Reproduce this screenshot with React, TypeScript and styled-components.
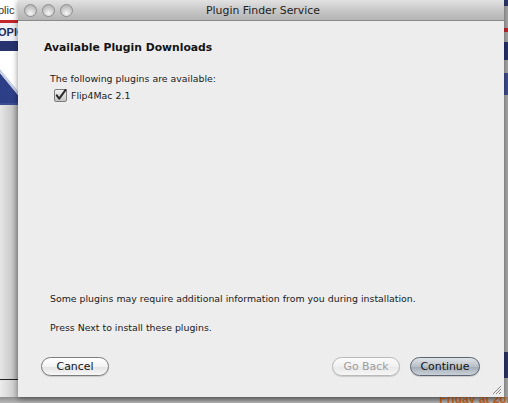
import React from 'react';
import styled, { createGlobalStyle } from 'styled-components';

const GlobalStyle = createGlobalStyle`
  html, body {
    margin: 0;
    padding: 0;
    width: 508px;
    height: 403px;
    overflow: hidden;
    background: #9c9c9c;
  }
`;

const Screen = styled.div`
  position: relative;
  width: 508px;
  height: 403px;
  overflow: hidden;
  font-family: "DejaVu Sans", "Liberation Sans", sans-serif;
  background: #b0b0b0;
`;

// the web page behind the dialog: only thin slivers of it show
const PageEdge = styled.div<{ $side: 'left' | 'right' }>`
  position: absolute;
  top: 0;
  ${(p) => (p.$side === 'left' ? 'left: 0; width: 18px;' : 'right: 0; width: 4px;')}
  height: 397px;
  display: flex;
  flex-direction: column;
  overflow: hidden;
`;

const Band = styled.div<{ $h?: number; $bg: string }>`
  position: relative;
  flex: ${(p) => (p.$h ? `0 0 ${p.$h}px` : '1')};
  background: ${(p) => p.$bg};
  overflow: hidden;
  display: flex;
  align-items: center;
`;

const PageText = styled.span<{ $color: string; $bold?: boolean }>`
  white-space: nowrap;
  color: ${(p) => p.$color};
  font-family: "Liberation Sans", Arial, sans-serif;
  font-size: 11px;
  font-weight: ${(p) => (p.$bold ? 700 : 400)};
  margin-left: -2px;
`;

const PageFooter = styled.div`
  position: absolute;
  left: 0;
  bottom: 0;
  width: 508px;
  height: 6px;
  display: flex;
  justify-content: flex-end;
  overflow: hidden;
  background: linear-gradient(#8e8e8e, #b8b8b8);
`;

const FooterText = styled.span`
  color: #c8631e;
  font-family: "Liberation Sans", Arial, sans-serif;
  font-weight: 700;
  font-size: 12px;
  line-height: 12px;
  margin-top: -4px;
  margin-right: -6px;
  white-space: nowrap;
`;

const Window = styled.div`
  position: absolute;
  left: 18px;
  top: 0;
  width: 486px;
  height: 397px;
  display: flex;
  flex-direction: column;
  background: #ededed;
  box-shadow: 0 2px 6px rgba(0, 0, 0, 0.45);
`;

const TitleBar = styled.div`
  position: relative;
  height: 20px;
  flex: none;
  display: flex;
  align-items: center;
  justify-content: center;
  background: linear-gradient(#e2e2e2, #c4c4c4 60%, #b4b4b4);
  border-bottom: 1px solid #8a8a8a;
`;

const Lights = styled.div`
  position: absolute;
  left: 6px;
  top: 4px;
  display: flex;
  gap: 5px;
`;

const Light = styled.div`
  width: 13px;
  height: 13px;
  border-radius: 50%;
  border: 1px solid #8e8e8e;
  box-sizing: border-box;
  background: radial-gradient(circle at 50% 75%, #f6f6f6 0%, #d0d0d0 45%, #a8a8a8 100%);
`;

const Title = styled.div`
  font-size: 10.9px;
  color: #1e1e1e;
  padding-left: 4px;
`;

const Body = styled.div`
  flex: 1;
  display: flex;
  flex-direction: column;
  padding: 20px 24px 21px 26px;
`;

const Heading = styled.div`
  font-size: 10.8px;
  font-weight: 700;
  color: #141414;
  line-height: 13px;
`;

const Text = styled.div<{ $top: number }>`
  font-size: 9.4px;
  color: #1a1a1a;
  line-height: 12px;
  margin-top: ${(p) => p.$top}px;
  padding-left: 6px;
`;

const PluginRow = styled.label`
  display: flex;
  align-items: center;
  gap: 4px;
  margin-top: 4px;
  padding-left: 10px;
  font-size: 9.4px;
  color: #1a1a1a;
  line-height: 13px;
`;

const Spacer = styled.div`
  flex: 1;
`;

const Buttons = styled.div`
  display: flex;
  align-items: center;
  margin-top: 23px;
  gap: 10px;
`;

const Button = styled.button<{ $default?: boolean }>`
  height: 19px;
  width: ${(p) => (p.$default ? 70 : 68)}px;
  border-radius: 10px;
  font-family: "DejaVu Sans", "Liberation Sans", sans-serif;
  font-size: 10.9px;
  padding: 0;
  color: ${(p) => (p.disabled ? '#9d9d9d' : '#111')};
  border: 1px solid ${(p) => (p.disabled ? '#b9b9b9' : p.$default ? '#5c6470' : '#7c7c7c')};
  background: ${(p) =>
    p.$default
      ? 'linear-gradient(#dfe3e8, #b9c0c8 50%, #a2abb5 51%, #c9d0d8)'
      : p.disabled
      ? 'linear-gradient(#fbfbfb, #f0f0f0 50%, #e8e8e8 51%, #f6f6f6)'
      : 'linear-gradient(#ffffff, #f3f3f3 50%, #e2e2e2 51%, #f7f7f7)'};
  box-shadow: 0 1px 1px rgba(0, 0, 0, 0.15);
`;

const LeftButton = styled(Button)`
  margin-left: -3px;
  margin-right: auto;
`;

const Grip = styled.svg`
  position: absolute;
  right: 2px;
  bottom: 2px;
`;

const CheckBox = () => (
  <svg width="13" height="13" viewBox="0 0 13 13">
    <defs>
      <linearGradient id="cb" x1="0" y1="0" x2="0" y2="1">
        <stop offset="0" stopColor="#f4f4f4" />
        <stop offset="1" stopColor="#c4c4c4" />
      </linearGradient>
    </defs>
    <rect x="0.5" y="0.5" width="12" height="12" rx="1.5" fill="url(#cb)" stroke="#7d7d7d" />
    <path d="M2.8 6.4 L5.2 9.6 L11.6 0.8" fill="none" stroke="#2a2a2a" strokeWidth="2" strokeLinecap="round" strokeLinejoin="round" />
  </svg>
);

export default function App() {
  return (
    <>
      <GlobalStyle />
      <Screen>
        <PageEdge $side="left">
          <Band $h={20} $bg="#ffffff">
            <PageText $color="#333">plic</PageText>
          </Band>
          <Band $h={3} $bg="#c4262c" />
          <Band $h={18} $bg="#eef0f6">
            <PageText $color="#1f2a5e" $bold>OPIC</PageText>
          </Band>
          <Band $h={10} $bg="#27336f" />
          <Band $h={52} $bg="#ffffff">
            <svg width="18" height="52">
              <polygon points="0,22 0,52 18,52 18,44" fill="#2d3f86" />
              <polygon points="0,22 18,44 18,40 0,18" fill="#c9cfe2" />
            </svg>
          </Band>
          <Band $h={2} $bg="#3b4c8f" />
          <Band $bg="linear-gradient(90deg, #e6e6e6 0px, #c9c9c9 12px, #a9a9a9 18px)" />
          <Band $h={1} $bg="#222" />
          <Band $h={17} $bg="linear-gradient(90deg, #ececec, #c6c6c6)" />
        </PageEdge>
        <PageEdge $side="right">
          <Band $h={6} $bg="#2b3566" />
          <Band $h={22} $bg="#a9a9a9" />
          <Band $h={4} $bg="#c4262c" />
          <Band $h={10} $bg="#a9a9a9" />
          <Band $h={18} $bg="#27336f" />
          <Band $h={13} $bg="#a9a9a9" />
          <Band $h={22} $bg="#3e4e90" />
          <Band $bg="#a9a9a9" />
          <Band $h={26} $bg="#2b3566" />
          <Band $h={19} $bg="#a9a9a9" />
        </PageEdge>
        <PageFooter>
          <FooterText>Friday at 2on</FooterText>
        </PageFooter>

        <Window>
          <TitleBar>
            <Lights>
              <Light />
              <Light />
              <Light />
            </Lights>
            <Title>Plugin Finder Service</Title>
          </TitleBar>
          <Body>
            <Heading>Available Plugin Downloads</Heading>
            <Text $top={19}>The following plugins are available:</Text>
            <PluginRow>
              <CheckBox />
              <span>Flip4Mac 2.1</span>
            </PluginRow>
            <Spacer />
            <Text $top={0}>Some plugins may require additional information from you during installation.</Text>
            <Text $top={17}>Press Next to install these plugins.</Text>
            <Buttons>
              <LeftButton>Cancel</LeftButton>
              <Button disabled>Go Back</Button>
              <Button $default>Continue</Button>
            </Buttons>
          </Body>
          <Grip width="11" height="11" viewBox="0 0 11 11">
            <path d="M10 2 L2 10 M10 5 L5 10 M10 8 L8 10" stroke="#8a8a8a" strokeWidth="1" />
          </Grip>
        </Window>
      </Screen>
    </>
  );
}
